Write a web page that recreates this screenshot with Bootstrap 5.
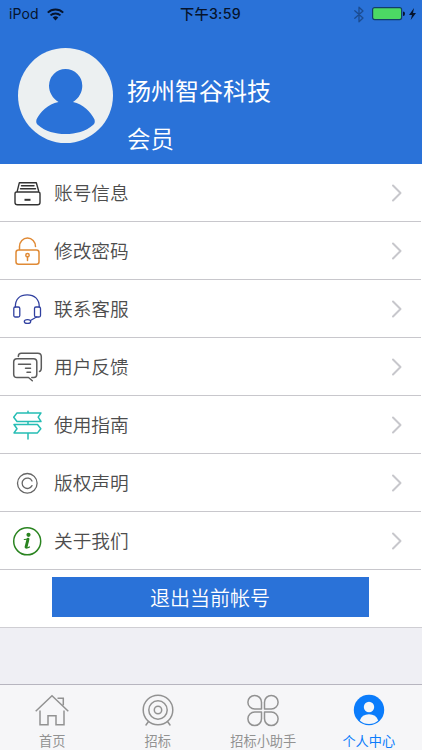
<!DOCTYPE html>
<html lang="zh-CN">
<head>
<meta charset="utf-8">
<meta name="viewport" content="width=device-width, initial-scale=1">
<title>个人中心</title>
<link href="https://cdn.jsdelivr.net/npm/bootstrap@5.3.0/dist/css/bootstrap.min.css" rel="stylesheet">
<style>
html,body{height:100%}
body{font-family:"Noto Sans CJK SC",sans-serif;background:#efeff4;overflow:hidden}
svg{display:block;flex:none;overflow:visible;fill:none;stroke-linecap:round;stroke-linejoin:round}
svg.crisp{stroke-linecap:butt;stroke-linejoin:miter}
.hero{height:164px;background:#2a72d8}
.status{height:28px;color:#06142c;font-size:14px;line-height:28px;padding:0 6px 0 9px}
.status .side{flex:1 1 0}
.device{font-family:Inter,sans-serif;font-size:14px;letter-spacing:.1px}
.clock{font-family:Inter,"Noto Sans CJK SC",sans-serif;font-weight:500;font-size:14.2px;letter-spacing:.3px}
.profile{padding:20px 0 0 18px}
.who{padding:22px 0 0 14px;font-size:24px;line-height:40px;color:#fff}
.who .role{margin-top:8px;font-size:23.5px;font-weight:350}
.menu .list-group-item{height:58px;padding:0 20px 1px 11px;border:0;background:#fff;color:#4d4d4d;font-size:18.7px;font-weight:350}
.menu .list-group-item::after{content:"";position:absolute;left:0;right:1px;bottom:0;height:1px;background:#c8c7cc}
.menu .label-text{margin-left:11px;line-height:56px;padding-bottom:1px}
.exit-row{height:58px;background:#fff;border-bottom:1px solid #cfced3;padding:7px 53px 0 52px}
.exit{height:40px;background:#2a72d8;color:#fff;border:0;border-radius:0;font-size:20px;font-weight:350;line-height:40px;padding:1px 1px 0 0}
.exit:hover{background:#2466c4;color:#fff}
.tabs{height:66px;background:#f6f6f8;border-top:1px solid #b7b5bf}
.tabs .nav-link{padding:8px 1px 0 0;color:#929292;font-size:13.2px;line-height:18px}
.tabs .nav-link.active{color:#0b7cfb}
.tabs span{margin-top:5px}
</style>
<script src="https://cdn.jsdelivr.net/npm/bootstrap@5.3.0/dist/js/bootstrap.bundle.min.js"></script>
</head>
<body class="d-flex flex-column">
<header class="hero">
  <div class="status d-flex">
    <div class="side d-flex align-items-center">
      <span class="device">iPod</span>
      <svg class="crisp ms-2" width="17" height="13" viewBox="0 0 17 13" stroke="#06142c" stroke-width="2"><path d="M.8 4.600a11 11 0 0 1 15.400 0M3.500 7.400a7.200 7.200 0 0 1 10 0"/><path d="M5.700 9.500a4 4 0 0 1 5.600 0L8.500 12.400z" fill="#06142c" stroke="none"/></svg>
    </div>
    <div class="clock pe-1">下午3:59</div>
    <div class="side d-flex align-items-center justify-content-end">
      <svg width="10" height="17" viewBox="0 0 10 17" stroke="#1b4c91" stroke-width="1.300"><path d="M.8 4.700 9 12 5 15.800V1.200L9 5 .8 12.200"/></svg>
      <svg class="ms-2" width="33" height="14" viewBox="0 0 33 14"><rect x=".6" y=".6" width="29" height="12" rx="2" fill="#4cd964" stroke="#123f68" stroke-width="1.200"/><path d="M31 4.500q2 0 2 2.200T31 9z" fill="#06142c"/></svg>
      <svg class="ms-1" width="7" height="12" viewBox="0 0 7 12"><path d="M5 0 0 7h3L1.700 12 7 5H4z" fill="#06142c"/></svg>
    </div>
  </div>
  <div class="profile d-flex">
    <svg width="95" height="95" viewBox="0 0 95 95"><circle cx="47.500" cy="47.500" r="47.500" fill="#ecf0f1"/><path d="M47.500 21a16.800 16.800 0 0 1 16.800 16.800C64.300 44 61 50.500 55 54C65 56 73 64 76.500 71.500Q77.500 75 75 77C67.500 83.500 58 86 47.500 86S27.500 83.500 20 77Q17.500 75 18.500 71.500C22 64 30 56 40.500 54C34.500 50.500 31 44 31 37.800A16.800 16.800 0 0 1 47.500 21z" fill="#2a72d8"/></svg>
    <div class="who"><div>扬州智谷科技</div><div class="role">会员</div></div>
  </div>
</header>
<main class="flex-grow-1">
  <div class="menu list-group list-group-flush">
    <a href="#" class="list-group-item d-flex align-items-center">
      <svg width="32" height="34" viewBox="0 0 32 34" stroke="#333" stroke-width="1.400"><path d="M6.300 14.800 8.300 6.800h17l2.300 8M10.500 9.800h12.500M9.500 12.800h15M6 16H5.500q-1.500 0-1.500 2v8.500q0 2.300 2.500 2.300h20q2.500 0 2.500-2.300V18q0-2-1.500-2H6"/><path d="M13.500 23.800h6" stroke-width="2" stroke-linecap="butt"/></svg>
      <span class="label-text">账号信息</span><svg class="ms-auto" width="11" height="18" viewBox="0 0 11 18" stroke="#c7c7cc" stroke-width="2"><path d="m2 1.500 7.500 7.500L2 16.500"/></svg></a>
    <a href="#" class="list-group-item d-flex align-items-center">
      <svg width="32" height="34" viewBox="0 0 32 34" stroke="#e08a35" stroke-width="1.500"><rect x="5" y="16" width="23" height="14.300" rx="2.500"/><path d="M8.500 15.500v-3a8 8.500 0 0 1 16 0M16.500 22.500v4"/><circle cx="16.500" cy="21.200" r="1.700"/></svg>
      <span class="label-text">修改密码</span><svg class="ms-auto" width="11" height="18" viewBox="0 0 11 18" stroke="#c7c7cc" stroke-width="2"><path d="m2 1.500 7.500 7.500L2 16.500"/></svg></a>
    <a href="#" class="list-group-item d-flex align-items-center">
      <svg width="32" height="34" viewBox="0 0 32 34" stroke="#3040a0" stroke-width="1.300"><rect x="2.800" y="15" width="6" height="10" rx="1.500"/><rect x="23.500" y="15" width="6" height="10" rx="1.500"/><path d="M4.300 15C4.300 7 9 2.800 16.200 2.800S28.300 7 28.300 15M25.500 25l-6 3.500"/><ellipse cx="16.500" cy="29.500" rx="3.200" ry="1.900"/></svg>
      <span class="label-text">联系客服</span><svg class="ms-auto" width="11" height="18" viewBox="0 0 11 18" stroke="#c7c7cc" stroke-width="2"><path d="m2 1.500 7.500 7.500L2 16.500"/></svg></a>
    <a href="#" class="list-group-item d-flex align-items-center">
      <svg width="32" height="34" viewBox="0 0 32 34" stroke="#5b5b5b" stroke-width="1.500"><path d="m21.300 30.800-3.800-3.300H6q-3.300 0-3.300-3.300V12Q2.700 8.700 6 8.700h16.500q3.300 0 3.300 3.300v12.200q0 3.300-3 3.300h-2M7.300 6.500q0-3.200 3-3.200h16.500q3.500 0 3.500 3.500V18q0 3-1.800 3.400M7.500 14.300h12M14.500 18.300h5M16 22.300h3.500"/></svg>
      <span class="label-text">用户反馈</span><svg class="ms-auto" width="11" height="18" viewBox="0 0 11 18" stroke="#c7c7cc" stroke-width="2"><path d="m2 1.500 7.500 7.500L2 16.500"/></svg></a>
    <a href="#" class="list-group-item d-flex align-items-center">
      <svg width="32" height="34" viewBox="0 0 32 34" stroke="#25bdb4" stroke-width="1.500"><path d="M2.700 9.200 6 4.900h24l-2.800 4.300 2.800 4.300H6zM29.800 20.700l-3.300-4.200H3l3 4.200-3 4.200h23.500zM17 3.300v1.500M17 13.500v3M17 25v6"/></svg>
      <span class="label-text">使用指南</span><svg class="ms-auto" width="11" height="18" viewBox="0 0 11 18" stroke="#c7c7cc" stroke-width="2"><path d="m2 1.500 7.500 7.500L2 16.500"/></svg></a>
    <a href="#" class="list-group-item d-flex align-items-center">
      <svg width="32" height="34" viewBox="0 0 32 34" stroke="#666" stroke-width="1.300"><circle cx="16.300" cy="17.300" r="9.800"/><path d="M21 15a5.200 5.200 0 1 0 0 4.600"/></svg>
      <span class="label-text">版权声明</span><svg class="ms-auto" width="11" height="18" viewBox="0 0 11 18" stroke="#c7c7cc" stroke-width="2"><path d="m2 1.500 7.500 7.500L2 16.500"/></svg></a>
    <a href="#" class="list-group-item d-flex align-items-center">
      <svg width="32" height="34" viewBox="0 0 32 34" stroke="#2a8420" stroke-width="1.500"><circle cx="16.200" cy="17.300" r="13.500"/><circle cx="17.500" cy="10.800" r="2.100" fill="#2a8420" stroke="none"/><path d="M13.300 15.500q2.500-.2 4.200-.8l-2 8q-.5 2.200 3 .3" stroke-width="1.200"/><path d="m17 15.200-2 8" stroke-width="2.800"/></svg>
      <span class="label-text">关于我们</span><svg class="ms-auto" width="11" height="18" viewBox="0 0 11 18" stroke="#c7c7cc" stroke-width="2"><path d="m2 1.500 7.500 7.500L2 16.500"/></svg></a>
  </div>
  <div class="exit-row"><button class="btn exit d-block w-100" type="button">退出当前帐号</button></div>
</main>
<nav class="tabs nav nav-justified flex-nowrap">
  <a href="#" class="nav-link d-flex flex-column align-items-center"><svg class="crisp" width="34" height="34" viewBox="0 0 34 34" stroke="#929292" stroke-width="1.500"><path d="M.7 18.300 17 2.700l16.300 15.600M22.500 5.300h5.800v7M5 17.500v14.200h8v-9h8v9h8V17.500"/></svg><span>首页</span></a>
  <a href="#" class="nav-link d-flex flex-column align-items-center"><svg width="34" height="34" viewBox="0 0 34 34" stroke="#929292" stroke-width="1.500"><circle cx="17" cy="17" r="14.800"/><circle cx="17" cy="17" r="9.200"/><circle cx="17" cy="17" r="3.700"/><path d="m7.500 28.500-2.500 3.500M26.500 28.500l2.500 3.500"/></svg><span>招标</span></a>
  <a href="#" class="nav-link d-flex flex-column align-items-center"><svg width="34" height="34" viewBox="0 0 34 34" stroke="#929292" stroke-width="1.500"><path d="M15.500 16V9.200A6.800 6.800 0 1 0 8.700 16zM18.500 16V9.200A6.800 6.800 0 1 1 25.300 16zM15.500 19v6.800A6.800 6.800 0 1 1 8.700 19zM18.500 19v6.800A6.800 6.800 0 1 0 25.300 19z"/></svg><span>招标小助手</span></a>
  <a href="#" class="nav-link active d-flex flex-column align-items-center"><svg width="34" height="34" viewBox="0 0 34 34"><circle cx="17" cy="17" r="15.200" fill="#0b7cfb"/><circle cx="17" cy="14" r="5.200" fill="#f6f6f8"/><path d="M7.800 27.500Q10 21.200 17 21.200T26.200 27.500Q22.500 31 17 31T7.800 27.500z" fill="#f6f6f8"/></svg><span>个人中心</span></a>
</nav>
</body>
</html>
